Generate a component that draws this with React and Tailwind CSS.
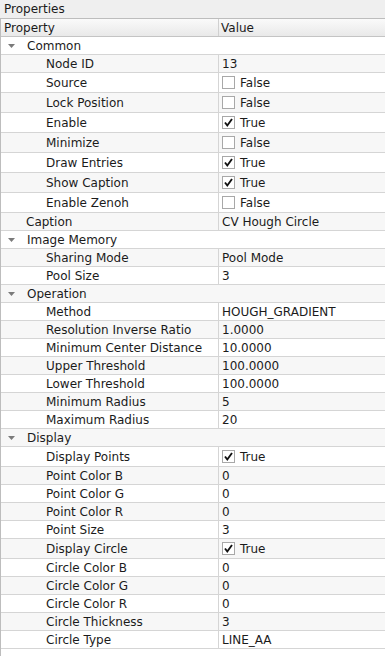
import React from 'react';

const groups = [
    {
        name: 'Common',
        items: [
            { label: 'Node ID', value: '13' },
            { label: 'Source', check: false },
            { label: 'Lock Position', check: false },
            { label: 'Enable', check: true },
            { label: 'Minimize', check: false },
            { label: 'Draw Entries', check: true },
            { label: 'Show Caption', check: true },
            { label: 'Enable Zenoh', check: false },
        ],
    },
    { leaf: true, label: 'Caption', value: 'CV Hough Circle' },
    {
        name: 'Image Memory',
        items: [
            { label: 'Sharing Mode', value: 'Pool Mode' },
            { label: 'Pool Size', value: '3' },
        ],
    },
    {
        name: 'Operation',
        items: [
            { label: 'Method', value: 'HOUGH_GRADIENT' },
            { label: 'Resolution Inverse Ratio', value: '1.0000' },
            { label: 'Minimum Center Distance', value: '10.0000' },
            { label: 'Upper Threshold', value: '100.0000' },
            { label: 'Lower Threshold', value: '100.0000' },
            { label: 'Minimum Radius', value: '5' },
            { label: 'Maximum Radius', value: '20' },
        ],
    },
    {
        name: 'Display',
        items: [
            { label: 'Display Points', check: true },
            { label: 'Point Color B', value: '0' },
            { label: 'Point Color G', value: '0' },
            { label: 'Point Color R', value: '0' },
            { label: 'Point Size', value: '3' },
            { label: 'Display Circle', check: true },
            { label: 'Circle Color B', value: '0' },
            { label: 'Circle Color G', value: '0' },
            { label: 'Circle Color R', value: '0' },
            { label: 'Circle Thickness', value: '3' },
            { label: 'Circle Type', value: 'LINE_AA' },
        ],
    },
];

const CheckBox = ({ checked }) => (
    <span className="w-[13px] h-[13px] border border-[#a8a8a8] bg-white flex items-center justify-center mr-[5px] shrink-0">
        {checked && (
            <svg width="11" height="11" viewBox="0 0 11 11">
                <path d="M2 5.5 L4.3 8.5 L9 2" fill="none" stroke="#111" strokeWidth="1.9" strokeLinejoin="miter" />
            </svg>
        )}
    </span>
);

const Arrow = () => (
    <svg width="7" height="4" viewBox="0 0 7 4" className="ml-[7px] mr-[12px] shrink-0">
        <path d="M0 0 L7 0 L3.5 4 Z" fill="#7a7a7a" />
    </svg>
);

const DataRow = ({ item, index, indent }) => {
    const bg = index % 2 === 1 ? 'bg-[#f7f7f7]' : 'bg-white';
    const h = item.check !== undefined ? 'h-[20px]' : 'h-[18px]';
    return (
        <div className={`flex ${h} ${bg} border-b border-[#d5d5d5]`}>
            <div className={`w-[218px] border-r border-[#d5d5d5] flex items-center ${indent ? 'pl-[45px]' : 'pl-[25px]'}`}>
                {item.label}
            </div>
            <div className="flex-1 flex items-center pl-[3px]">
                {item.check !== undefined ? (
                    <>
                        <CheckBox checked={item.check} />
                        {item.check ? 'True' : 'False'}
                    </>
                ) : (
                    item.value
                )}
            </div>
        </div>
    );
};

const GroupRow = ({ name, index }) => (
    <div className={`flex items-center h-[18px] border-b border-[#d5d5d5] ${index % 2 === 1 ? 'bg-[#f7f7f7]' : 'bg-white'}`}>
        <Arrow />
        {name}
    </div>
);

export default function App() {
    let idx = 0;
    const rows = [];
    groups.forEach((g) => {
        if (g.leaf) {
            rows.push(<DataRow key={g.label} item={g} index={idx++} indent={false} />);
            return;
        }
        rows.push(<GroupRow key={g.name} name={g.name} index={idx++} />);
        g.items.forEach((it) => {
            rows.push(<DataRow key={it.label} item={it} index={idx++} indent />);
        });
    });

    return (
        <div className="w-[385px] h-[656px] overflow-hidden bg-[#efefef] text-[12px] text-[#1b1b1b] flex flex-col" style={{ fontFamily: '"DejaVu Sans", sans-serif' }}>
            <div className="h-[18px] flex items-center pl-[4px] shrink-0">Properties</div>
            <div className="flex-1 bg-white border-l border-t border-[#bdbdbd]">
                <div className="flex h-[18px] border-b border-[#c4c4c4] bg-gradient-to-b from-[#fafafa] to-[#e9e9e9]">
                    <div className="w-[218px] border-r border-[#d0d0d0] flex items-center pl-[3px]">Property</div>
                    <div className="flex-1 flex items-center pl-[2px]">Value</div>
                </div>
                {rows}
            </div>
        </div>
    );
}
